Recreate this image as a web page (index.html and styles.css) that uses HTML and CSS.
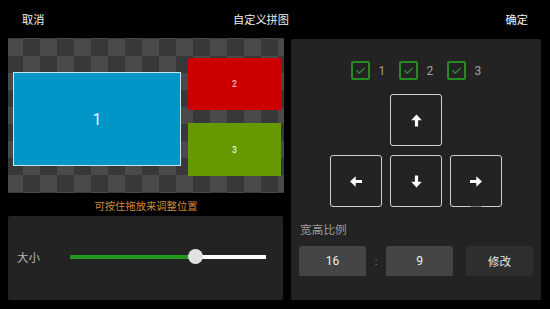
FILE: index.html
```html
<!DOCTYPE html>
<html lang="zh">
<head>
<meta charset="utf-8">
<title>自定义拼图</title>
<link rel="stylesheet" href="styles.css">
</head>
<body>
<div class="app">
  <header class="topbar">
    <span class="top-btn">取消</span>
    <span class="title">自定义拼图</span>
    <span class="top-btn">确定</span>
  </header>
  <main class="main">
    <section class="left">
      <div class="preview">
        <div class="tile tile-1">1</div>
        <div class="tile tile-2">2</div>
        <div class="tile tile-3">3</div>
      </div>
      <div class="hint">可按住拖放来调整位置</div>
      <div class="size-panel">
        <span class="size-label">大小</span>
        <div class="slider">
          <div class="slider-fill" style="width: 64%"></div>
          <div class="slider-thumb" style="left: 64%"></div>
        </div>
      </div>
    </section>
    <section class="right">
      <div class="checks">
        <div class="check"><span class="box"><svg viewBox="0 0 15 15" width="15" height="15"><path d="M3.5 7.5 L6.3 10.2 L11.5 5" fill="none" stroke="#2f9a2f" stroke-width="1.1"/></svg></span><span class="check-num">1</span></div>
        <div class="check"><span class="box"><svg viewBox="0 0 15 15" width="15" height="15"><path d="M3.5 7.5 L6.3 10.2 L11.5 5" fill="none" stroke="#2f9a2f" stroke-width="1.1"/></svg></span><span class="check-num">2</span></div>
        <div class="check"><span class="box"><svg viewBox="0 0 15 15" width="15" height="15"><path d="M3.5 7.5 L6.3 10.2 L11.5 5" fill="none" stroke="#2f9a2f" stroke-width="1.1"/></svg></span><span class="check-num">3</span></div>
      </div>
      <div class="pad">
        <div class="pad-row">
          <div class="arrow-btn" role="button"><svg class="arrow up" viewBox="0 0 11 13" width="11" height="13"><polygon points="5.5,0.5 10.8,6.2 7.1,6.2 7.1,12.5 3.9,12.5 3.9,6.2 0.2,6.2" fill="#fff"/></svg></div>
        </div>
        <div class="pad-row">
          <div class="arrow-btn" role="button"><svg class="arrow left" viewBox="0 0 11 13" width="11" height="13"><polygon points="5.5,0.5 10.8,6.2 7.1,6.2 7.1,12.5 3.9,12.5 3.9,6.2 0.2,6.2" fill="#fff"/></svg></div>
          <div class="arrow-btn" role="button"><svg class="arrow down" viewBox="0 0 11 13" width="11" height="13"><polygon points="5.5,0.5 10.8,6.2 7.1,6.2 7.1,12.5 3.9,12.5 3.9,6.2 0.2,6.2" fill="#fff"/></svg></div>
          <div class="arrow-btn" role="button"><svg class="arrow right" viewBox="0 0 11 13" width="11" height="13"><polygon points="5.5,0.5 10.8,6.2 7.1,6.2 7.1,12.5 3.9,12.5 3.9,6.2 0.2,6.2" fill="#fff"/></svg></div>
        </div>
      </div>
      <div class="ratio-label">宽高比例</div>
      <div class="ratio-row">
        <span class="ratio-field">16</span>
        <span class="ratio-sep">:</span>
        <span class="ratio-field">9</span>
        <div class="ratio-btn" role="button">修改</div>
      </div>
    </section>
  </main>
</div>
</body>
</html>
```

FILE: styles.css
```css
* { box-sizing: border-box; }
html, body { margin: 0; padding: 0; background: #000; }
body {
  width: 550px;
  height: 309px;
  overflow: hidden;
  font-family: Roboto, "Noto Sans CJK SC", sans-serif;
  color: #fff;
}
.app { display: flex; flex-direction: column; height: 309px; }
.topbar {
  height: 38px;
  display: flex;
  align-items: center;
  justify-content: space-between;
  padding: 0 22px 1px 22px;
  font-size: 11.2px;
  color: #f2f2f2;
}
.title { color: #eee; margin-right: 28px; }
.main {
  display: flex;
  gap: 7px;
  padding: 0 9px 9px 8px;
  flex: 1;
}
.left { width: 276px; display: flex; flex-direction: column; }
.preview {
  position: relative;
  height: 155px;
  background: repeating-conic-gradient(#383838 0 25%, #4a4a4a 0 50%) -19px -16px / 34px 34px;
}
.tile {
  position: absolute;
  display: flex;
  align-items: center;
  justify-content: center;
}
.tile-1 {
  left: 5px; top: 34px; width: 168px; height: 94px;
  background: #0096c8;
  border: 1px solid #c6e6f2;
  font-size: 16px;
  color: #e8f4f8;
}
.tile-2 {
  left: 180px; top: 20px; width: 93px; height: 52px;
  background: #cc0000;
  font-size: 8.5px;
  font-weight: bold;
  color: #f3a8a8;
}
.tile-3 {
  left: 180px; top: 85px; width: 93px; height: 53px;
  background: #669900;
  font-size: 8.5px;
  font-weight: bold;
  color: #d8ecc0;
}
.hint {
  height: 23px;
  display: flex;
  align-items: center;
  justify-content: center;
  font-size: 10.3px;
  color: #d08a3c;
  padding-top: 1px;
}
.size-panel {
  flex: 1;
  background: #232323;
  border-radius: 2px;
  display: flex;
  align-items: center;
  padding: 0 17px 0 9px;
  margin-right: 1px;
}
.size-label { width: 53px; font-size: 11.5px; color: #b8b8b8; padding-bottom: 2px; }
.slider {
  position: relative;
  flex: 1;
  height: 4px;
  background: #fff;
  margin-top: -3px;
}
.slider-fill { position: absolute; left: 0; top: 0; bottom: 0; background: #1f9a1f; }
.slider-thumb {
  position: absolute;
  top: 50%;
  width: 15px; height: 15px;
  margin: -7.5px 0 0 -7.5px;
  border-radius: 50%;
  background: #e2e2e2;
}
.right {
  flex: 1;
  background: #232323;
  border-radius: 2px;
  margin-top: 1px;
  display: flex;
  flex-direction: column;
  align-items: center;
  padding: 0 8px;
}
.checks { display: flex; margin-top: 22px; padding-left: 1px; }
.check { display: flex; align-items: center; margin-right: 12px; }
.check:last-child { margin-right: 0; }
.box {
  width: 19px; height: 19px;
  border: 2px solid #238c23;
  border-radius: 2px;
  display: flex; align-items: center; justify-content: center;
}
.box svg { display: block; }
.check-num { font-size: 12px; color: #a0a0a0; margin-left: 9px; width: 8px; }
.pad { display: flex; flex-direction: column; align-items: center; gap: 9px; margin-top: 14px; }
.pad-row { display: flex; gap: 8px; }
.arrow-btn {
  width: 52px; height: 52px;
  border: 1px solid #cfcfcf;
  border-radius: 3px;
  display: flex; align-items: center; justify-content: center;
}
.arrow { display: block; }
.arrow.down { transform: rotate(180deg); }
.arrow.left { transform: rotate(-90deg); }
.arrow.right { transform: rotate(90deg); }
.ratio-label {
  align-self: stretch;
  font-size: 11.7px;
  color: #9a9a9a;
  margin-top: 15px;
  line-height: 17px;
  padding-left: 1px;
}
.ratio-row { align-self: stretch; display: flex; align-items: center; margin-top: 7px; }
.ratio-field {
  width: 67px; height: 30px;
  background: #454545;
  border-radius: 2px;
  display: flex; align-items: center; justify-content: center;
  font-size: 12px; color: #f0f0f0;
}
.ratio-sep { width: 20px; text-align: center; font-size: 11px; color: #888; }
.ratio-btn {
  width: 67px; height: 30px;
  margin-left: 13px;
  background: #2e2e2e;
  border-radius: 2px;
  display: flex; align-items: center; justify-content: center;
  font-family: "Noto Sans CJK SC", sans-serif;
  font-size: 11.5px;
  color: #e8e8e8;
}
```
